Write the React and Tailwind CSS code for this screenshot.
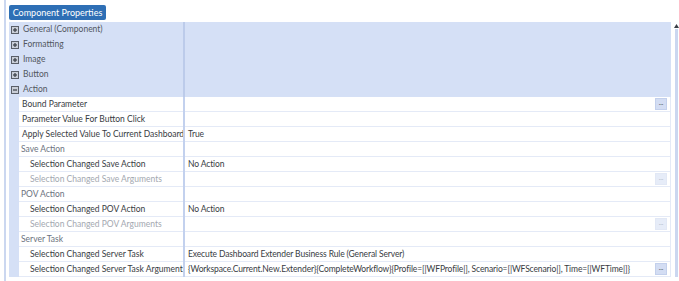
import React from "react";

const font = { fontFamily: '"Lato", "Liberation Sans", sans-serif' };

function PlusBox({ minus }) {
  return (
    <svg width="8" height="8" viewBox="0 0 8 8" className="shrink-0">
      <rect x="0.5" y="0.5" width="7" height="7" fill="#c9ced8" stroke="#5a5f68" />
      <line x1="2" y1="4" x2="6" y2="4" stroke="#3a3e45" strokeWidth="1.2" />
      {!minus && <line x1="4" y1="2" x2="4" y2="6" stroke="#3a3e45" strokeWidth="1.2" />}
    </svg>
  );
}

function Dots({ disabled }) {
  return (
    <div
      className={
        "absolute right-[3px] top-[1px] w-[12px] h-[12px] flex items-center justify-center border " +
        (disabled ? "bg-[#e6ecf8] border-[#e2e8f5]" : "bg-[#d3ddf3] border-[#c3d0ec]")
      }
    >
      <span className={"text-[7px] leading-none -mt-[3px] " + (disabled ? "text-[#b5bccb]" : "text-[#505660]")}>...</span>
    </div>
  );
}

const categories = [
  ["General (Component)", false],
  ["Formatting", false],
  ["Image", false],
  ["Button", false],
  ["Action", true],
];

const rows = [
  { name: "Bound Parameter", indent: 0, dots: true },
  { name: "Parameter Value For Button Click", indent: 0 },
  { name: "Apply Selected Value To Current Dashboard", indent: 0, value: "True" },
  { name: "Save Action", sub: true },
  { name: "Selection Changed Save Action", indent: 1, value: "No Action" },
  { name: "Selection Changed Save Arguments", indent: 1, disabled: true, dots: true },
  { name: "POV Action", sub: true },
  { name: "Selection Changed POV Action", indent: 1, value: "No Action" },
  { name: "Selection Changed POV Arguments", indent: 1, disabled: true, dots: true },
  { name: "Server Task", sub: true },
  { name: "Selection Changed Server Task", indent: 1, value: "Execute Dashboard Extender Business Rule (General Server)" },
  {
    name: "Selection Changed Server Task Arguments",
    indent: 1,
    dots: true,
    value:
      "{Workspace.Current.New.Extender}{CompleteWorkflow}{Profile=[|WFProfile|], Scenario=[|WFScenario|], Time=[|WFTime|]}",
  },
];

export default function App() {
  return (
    <div className="w-[679px] h-[281px] overflow-hidden bg-white text-[8.5px]" style={font}>
      <div className="pl-[4px] h-full">
        <div className="border-l-2 border-[#cbd7f0] h-full pl-[3px] pt-[5px]">
          <div className="h-[15px] w-[97px] bg-[#2e6fb5] rounded-[2px] text-white text-[9px] flex items-center justify-center">
            Component Properties
          </div>
          <div className="flex mt-[2px]">
            <div className="w-[662px] bg-[#d5e0f6] relative">
              {categories.map(([label, open]) => (
                <div key={label} className="h-[15px] flex items-center">
                  <div className="w-[174px] flex items-center pl-[2px] gap-[4px] text-[#52575f]">
                    <PlusBox minus={open} />
                    <span>{label}</span>
                  </div>
                  <div className="w-[2px] h-full bg-[#bccbea]" />
                </div>
              ))}
              {rows.map((r) => (
                <div key={r.name} className="h-[15px] flex pl-[10px]">
                  <div
                    className={
                      "w-[164px] h-full bg-white border-b border-[#e4eaf7] flex items-center overflow-hidden whitespace-nowrap " +
                      (r.sub ? "pl-[2px] text-[#6b7280]" : r.indent ? "pl-[11px]" : "pl-[3px]") +
                      (r.disabled ? " text-[#a3a8b0]" : r.sub ? "" : " text-[#383c43]")
                    }
                  >
                    {r.name}
                  </div>
                  <div className="w-[2px] h-full bg-[#c3d1ee]" />
                  <div className="flex-1 h-full bg-white border-b border-r border-[#e4eaf7] relative flex items-center pl-[3px] text-[#383c43] tracking-[-0.12px] whitespace-nowrap overflow-hidden">
                    {r.value}
                    {r.dots && <Dots disabled={r.disabled} />}
                  </div>
                </div>
              ))}
            </div>
            <div className="ml-[3px] w-[4px] flex flex-col items-center pt-[2px]">
              <svg width="5" height="4" viewBox="0 0 5 4">
                <polygon points="2.5,0 5,4 0,4" fill="#3b3f46" />
              </svg>
              <div className="w-[3px] flex-1 h-[260px] bg-[#cbd7f0] mt-[1px]" />
            </div>
          </div>
        </div>
      </div>
    </div>
  );
}
